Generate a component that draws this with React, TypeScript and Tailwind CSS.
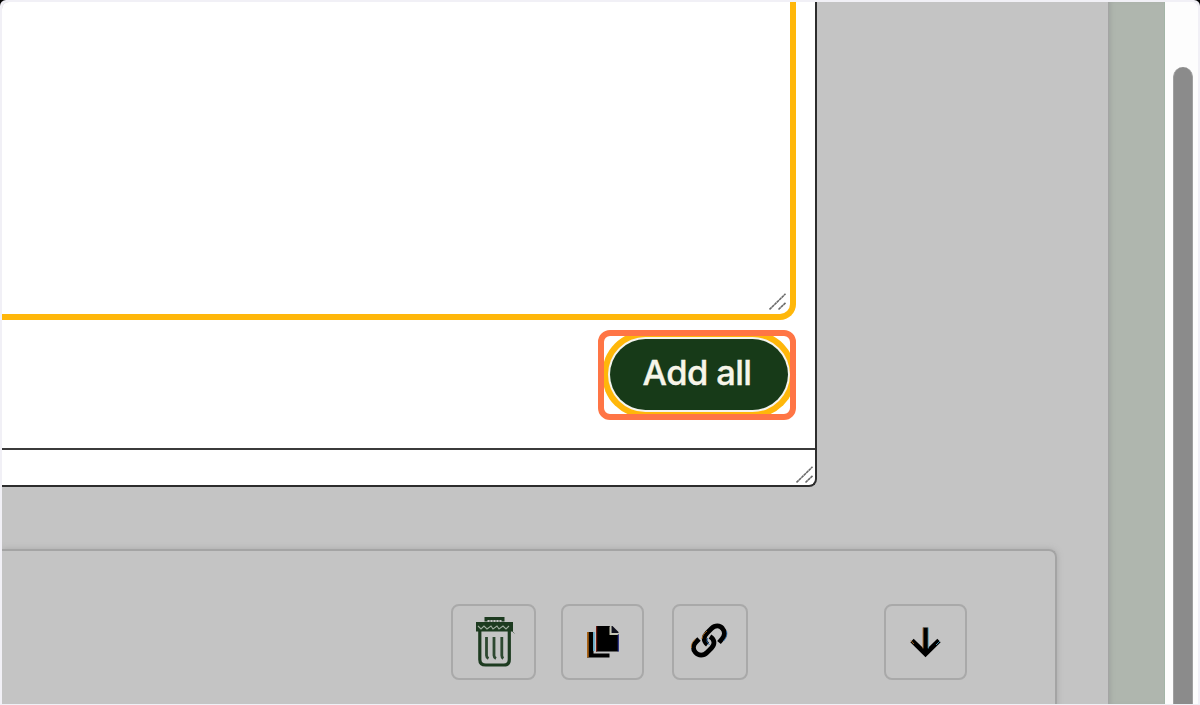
import React from "react";

function ResizeGrip({ className }: { className: string }) {
  return (
    <svg className={className} width="18" height="18" viewBox="0 0 18 18" fill="none" stroke="#6a6a6a" strokeWidth="1.6" strokeDasharray="3 0.4">
      <path d="M0.500 16.500 16.500 0.800" />
      <path d="M9.500 16.500 16.500 9.800" />
    </svg>
  );
}

function ToolButton({ label, className, children }: { label: string; className: string; children: React.ReactNode }) {
  return (
    <button aria-label={label} className={`flex h-[76px] shrink-0 items-start rounded-lg border-2 border-[#a9a9a9] ${className}`}>
      {children}
    </button>
  );
}

function TrashIcon() {
  return (
    <svg className="ml-[22px] mt-2.5" width="41" height="52" viewBox="0 0 41 52" fill="none" stroke="#1d3b20">
      <path d="M11 5.500V2.500h17v3" strokeWidth="3" />
      <path d="M14 5h12" strokeWidth="1.200" strokeDasharray="2 1" opacity="0.700" />
      <path d="M1 6h37v9.500H1z" fill="#1d3b20" stroke="none" />
      <path d="m3 10 3 3 3-3 3 3 4-3 2 3 4-3 2 3 4-3 3 3 3-3" stroke="#9eac9e" strokeWidth="1.100" />
      <path d="m37 15 2.500 2.500" strokeWidth="1" opacity="0.500" />
      <path d="M4.800 15v28.500q0 5.500 6 5.500h18q5.500 0 5.500-5.500V15" strokeWidth="3.200" />
      <path d="M11.500 21v18.500q0 2 2 3M19 21v18.500q0 2 2 3M26.800 21v18.500q0 2 1.500 3" strokeWidth="2.800" opacity="0.900" />
    </svg>
  );
}

function CopyIcon() {
  return (
    <svg className="ml-6 mt-[19px]" width="33" height="36" viewBox="0 0 33 36">
      <path d="M0 7h6.500v21.500h16v4H0z" fill="#000" />
      <path d="M0 7h1.800v25.500H0z" fill="#a96112" />
      <path d="M6 7h1.800v19H6z" fill="#64a9c9" />
      <path d="M9 1h14v8h8.500v17.500H9z" fill="#000" />
      <path d="M9 1h1.200v25.500H9z" fill="#701b10" />
      <path d="M24.500 1h1l6 6v1h-7z" fill="#10101c" />
      <path d="M23.300 1.500v7.700h8" fill="none" stroke="#c5c5b0" strokeWidth="1.600" />
      <path d="M31.200 9.500v17" stroke="#1c2795" strokeWidth="1" />
    </svg>
  );
}

function LinkIcon() {
  return (
    <svg className="ml-4 mt-[15px]" width="40" height="40" viewBox="0 0 40 40" fill="none" strokeWidth="4.800">
      <g stroke="#000">
        <path d="M17.500 23.500C13 20 13.500 15.500 17 12l4.500-4.500c3.500-3.500 8.500-3.500 11 0 3 3.500 2.500 7-0.500 10.500l-3 3.500" />
        <path d="M20 15.500c5 3 5 8 1.500 11.500L17 31.500c-3.500 3.500-8.500 3.500-11.500 0-3-3.500-2.500-7.500 0.500-10.500l3-3" />
      </g>
      <path d="M1.500 27c-.5-3 .5-6 4-9M12 18c0-4 3-6 5-8" stroke="#b56c1b" strokeWidth="0.900" />
      <path d="M36.500 10c1 4-.5 7-3 10M17.500 17q-2 4 2 7" stroke="#276aab" strokeWidth="0.900" />
    </svg>
  );
}

function ArrowDownIcon() {
  return (
    <svg className="ml-6 mt-[21px]" width="32" height="32" viewBox="0 0 32 32" fill="none">
      <path d="M15.500 0.500v26M2 13.500l13.500 13.300 13.500-13.300" stroke="#000" strokeWidth="4.800" />
      <path d="M13 0.500v21M0.800 13.500 4 17" stroke="#b26c20" strokeWidth="0.900" />
      <path d="M18.300 0.500v21M30 14l-4 4" stroke="#519bb8" strokeWidth="0.900" />
    </svg>
  );
}

function Dialog() {
  return (
    <section className="flex h-[485px] w-[815px] shrink-0 flex-col rounded-br-lg border-b-2 border-r-2 border-[#2d2d2d] bg-white">
      <div className="relative h-[318px] w-[794px] shrink-0 rounded-br-[16px] border-b-[6px] border-r-[6px] border-[#ffb70a]">
        <ResizeGrip className="absolute bottom-[3px] right-[3px]" />
      </div>
      <div className="mt-2.5 flex h-[90px] w-[794px] shrink-0 justify-end">
        <div className="relative h-[90px] w-[198px]">
          <button className="ml-3 mt-[9px] flex h-[71px] w-[178px] items-center justify-center rounded-full bg-[#173a18] shadow-[0_0_0_2px_#f5f5ef,0_0_0_8px_#ffb70a]">
            <span className="-mt-[2px] whitespace-nowrap pr-[4px] font-['Inter',sans-serif] text-[34.5px] font-medium leading-none tracking-[-0.6px] text-[#f7f5e9] [-webkit-text-stroke:0.4px_#f7f5e9]">Add all</span>
          </button>
          <div className="absolute inset-0 rounded-[12px] border-[6px] border-[#ff7545]" />
        </div>
      </div>
      <footer className="mt-[28px] flex flex-1 items-end justify-end border-t-2 border-[#3b3b3b]">
        <ResizeGrip className="mb-px mr-px" />
      </footer>
    </section>
  );
}

export default function App() {
  return (
    <div className="h-[705px] w-[1200px] overflow-hidden bg-black">
      <div className="flex h-[705px] w-[1200px] overflow-hidden rounded-t-[6px] bg-[#f1f0f6] px-0.5 pb-px pt-0.5">
        <div className="flex min-w-0 flex-1 overflow-hidden rounded-t-[7px] bg-white">
          <main className="flex h-[702px] w-[1107px] shrink-0 flex-col overflow-hidden border-r border-[#a4a4a4] bg-[#c4c4c4]">
            <Dialog />
            <section className="mt-[62px] h-[175px] w-[1055px] shrink-0 rounded-tr-lg border-r-2 border-t-2 border-[#a4a4a4] shadow-[0_0_6px_#a9a9a9]">
              <div className="flex pl-[448.5px] pt-[53px]">
                <ToolButton label="Delete" className="w-[85.5px]"><TrashIcon /></ToolButton>
                <ToolButton label="Duplicate" className="ml-[25px] w-[83px]"><CopyIcon /></ToolButton>
                <ToolButton label="Copy link" className="ml-7 w-[76px]"><LinkIcon /></ToolButton>
                <ToolButton label="Move down" className="ml-[136px] w-[83px]"><ArrowDownIcon /></ToolButton>
              </div>
            </section>
          </main>
          <aside className="w-[56px] shrink-0 border-r border-[#a4b5a7] bg-[#afb6ae] shadow-[inset_4px_0_4px_-2px_#a1a6a1]" />
          <aside className="flex flex-1 bg-[#fdfdfd] pl-2 pt-[65px]">
            <div className="w-5 rounded-t-full border-x border-[#a0a0a0] bg-[#8b8b8b]" />
          </aside>
        </div>
      </div>
    </div>
  );
}
